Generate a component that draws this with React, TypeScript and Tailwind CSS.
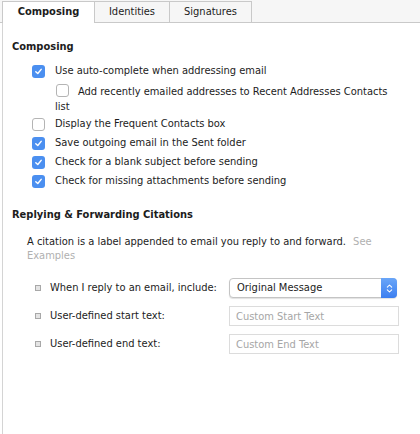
import React from "react";

const font = { fontFamily: '"DejaVu Sans Condensed", "DejaVu Sans", sans-serif' };

const Check = ({ on }: { on: boolean }) =>
  on ? (
    <span className="inline-flex h-[13px] w-[13px] shrink-0 items-center justify-center rounded-[3px] bg-[#4b8ff0]">
      <svg viewBox="0 0 10 10" className="h-[9px] w-[9px]">
        <path d="M2 5.2 L4.2 7.3 L8 2.6" fill="none" stroke="white" strokeWidth="1.6" strokeLinecap="round" strokeLinejoin="round" />
      </svg>
    </span>
  ) : (
    <span className="inline-block h-[13px] w-[13px] shrink-0 rounded-[3px] border border-[#b4b4b4] bg-white" />
  );

const Row = ({ on, children }: { on: boolean; children: React.ReactNode }) => (
  <div className="flex h-[19px] items-center gap-[10px] pl-[20px]">
    <Check on={on} />
    <span>{children}</span>
  </div>
);

const Bullet = () => (
  <span className="inline-block h-[6px] w-[6px] shrink-0 border border-[#a8a8a8] bg-[#e4e4e4]" />
);

export default function App() {
  return (
    <div className="h-[434px] w-[420px] overflow-hidden bg-white text-[11px] text-[#1c1c1c]" style={font}>
      <div className="flex h-[23px] border-b border-[#c9c9c9] bg-[#f6f6f6] pl-[2px] pt-[1px]">
        <div className="-mb-px flex w-[93px] items-center justify-center border-l border-r border-t border-[#c9c9c9] bg-white font-bold">
          Composing
        </div>
        <div className="flex w-[75px] items-center justify-center border-r border-t border-[#c9c9c9]">
          Identities
        </div>
        <div className="flex w-[82px] items-center justify-center border-r border-t border-[#c9c9c9]">
          Signatures
        </div>
      </div>

      <div className="ml-[2px] h-full border-l border-[#d4d4d4] pl-[9px] pr-[12px]">
        <div className="pt-[17px] font-bold leading-[14px]">Composing</div>

        <div className="mt-[8px]">
          <Row on>Use auto-complete when addressing email</Row>
          <div className="whitespace-nowrap pb-[2px] pl-[43px] pt-[3px] leading-[13px]">
            <span className="ml-[1px] mr-[9px] inline-block align-[-2px]">
              <Check on={false} />
            </span>
            Add recently emailed addresses to Recent Addresses Contacts
            <br />
            list
          </div>
          <Row on={false}>Display the Frequent Contacts box</Row>
          <Row on>Save outgoing email in the Sent folder</Row>
          <Row on>Check for a blank subject before sending</Row>
          <Row on>Check for missing attachments before sending</Row>
        </div>

        <div className="mt-[17px] font-bold leading-[14px]">Replying &amp; Forwarding Citations</div>

        <p className="mt-[13px] w-[360px] pl-[15px] leading-[14px]">
          A citation is a label appended to email you reply to and forward.{" "}
          <span className="ml-[4px] text-[#b0b0b0]">See Examples</span>
        </p>

        <div className="mt-[11px] pl-[23px]">
          <div className="flex h-[28px] items-center">
            <Bullet />
            <span className="ml-[9px] w-[179px]">When I reply to an email, include:</span>
            <div className="flex h-[20px] w-[168px] items-center justify-between rounded-[4px] border border-[#c4c4c4] bg-white pl-[7px] shadow-[0_1px_1px_rgba(0,0,0,0.12)]">
              <span>Original Message</span>
              <span className="-mr-px flex h-[20px] w-[16px] items-center justify-center rounded-r-[4px] bg-gradient-to-b from-[#6aa6f8] to-[#3b7ef0]">
                <svg viewBox="0 0 8 12" className="h-[11px] w-[7px]">
                  <path d="M1.5 4.5 L4 2 L6.5 4.5 M1.5 7.5 L4 10 L6.5 7.5" fill="none" stroke="white" strokeWidth="1.2" strokeLinecap="round" strokeLinejoin="round" />
                </svg>
              </span>
            </div>
          </div>
          <div className="flex h-[28px] items-center">
            <Bullet />
            <span className="ml-[9px] w-[179px]">User-defined start text:</span>
            <input
              className="h-[20px] w-[170px] border border-[#dcdcdc] px-[6px] text-[11px] outline-none placeholder:text-[#a6a6a6]"
              placeholder="Custom Start Text"
              style={font}
            />
          </div>
          <div className="flex h-[28px] items-center">
            <Bullet />
            <span className="ml-[9px] w-[179px]">User-defined end text:</span>
            <input
              className="h-[20px] w-[170px] border border-[#dcdcdc] px-[6px] text-[11px] outline-none placeholder:text-[#a6a6a6]"
              placeholder="Custom End Text"
              style={font}
            />
          </div>
        </div>
      </div>
    </div>
  );
}
